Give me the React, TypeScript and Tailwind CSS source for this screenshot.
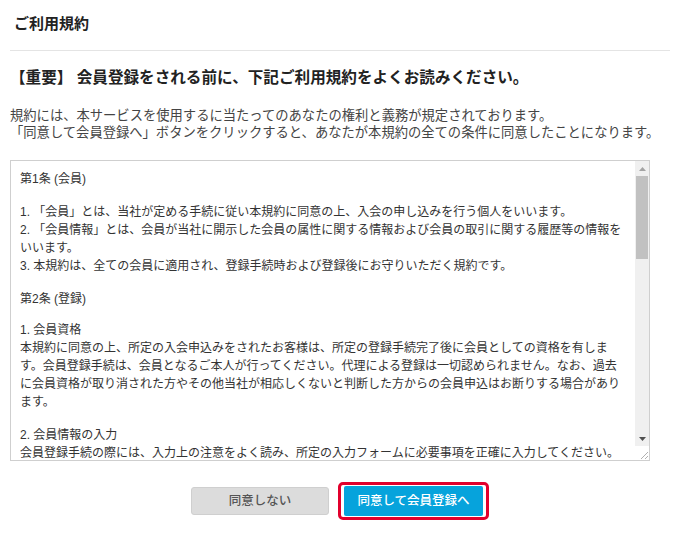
export default function App() {
    return (
        <div className="w-[680px] h-[533px] bg-white text-[#333] font-['Liberation_Sans','Noto_Sans_CJK_JP',sans-serif]">

            {/* ヘッダー */}
            <div className="px-[14px] pt-[15px] pb-[17px]">
                <h1 className="text-[15px] leading-[18px] font-bold text-[#222]">ご利用規約</h1>
            </div>
            <div className="mx-[10px] border-t border-[#e4e4e4]" />

            <div className="px-[10px]">
                <h2 className="mt-[16px] text-[15.6px] leading-[22px] font-bold text-[#222]">
                    【重要】 会員登録をされる前に、下記ご利用規約をよくお読みください。
                </h2>

                <div className="mt-[18px] text-[13.3px] leading-[17px] text-[#444] whitespace-nowrap">
                    <p>規約には、本サービスを使用するに当たってのあなたの権利と義務が規定されております。</p>
                    <p>「同意して会員登録へ」ボタンをクリックすると、あなたが本規約の全ての条件に同意したことになります。</p>
                </div>

                {/* 規約本文 */}
                <div className="mt-[19px] w-[640px] h-[301px] border border-[#cfcfcf] flex">
                    <div className="flex-1 overflow-hidden pl-[9px] pr-[9px] pt-[9px] text-[12px] leading-[18px] text-[#333] flex flex-col gap-[15px]">
                        <p>第1条 (会員)</p>
                        <div>
                            <p>1. 「会員」とは、当社が定める手続に従い本規約に同意の上、入会の申し込みを行う個人をいいます。</p>
                            <p>2. 「会員情報」とは、会員が当社に開示した会員の属性に関する情報および会員の取引に関する履歴等の情報をいいます。</p>
                            <p>3. 本規約は、全ての会員に適用され、登録手続時および登録後にお守りいただく規約です。</p>
                        </div>
                        <p className="-mb-[2px]">第2条 (登録)</p>
                        <div>
                            <p>1. 会員資格</p>
                            <p>本規約に同意の上、所定の入会申込みをされたお客様は、所定の登録手続完了後に会員としての資格を有します。会員登録手続は、会員となるご本人が行ってください。代理による登録は一切認められません。なお、過去に会員資格が取り消された方やその他当社が相応しくないと判断した方からの会員申込はお断りする場合があります。</p>
                        </div>
                        <div className="shrink-0">
                            <p>2. 会員情報の入力</p>
                            <p>会員登録手続の際には、入力上の注意をよく読み、所定の入力フォームに必要事項を正確に入力してください。</p>
                        </div>
                    </div>

                    {/* スクロールバー */}
                    <div className="w-[14px] flex flex-col bg-[#f0f0f0]">
                        <div className="h-[15px] flex items-center justify-center">
                            <svg width="7" height="4" viewBox="0 0 7 4"><path d="M0 4 L3.5 0 L7 4 Z" fill="#a3a3a3" /></svg>
                        </div>
                        <div className="mx-[1px] h-[83px] bg-[#c1c1c1]" />
                        <div className="flex-1" />
                        <div className="h-[15px] flex items-center justify-center">
                            <svg width="7" height="4" viewBox="0 0 7 4"><path d="M0 0 L3.5 4 L7 0 Z" fill="#505050" /></svg>
                        </div>
                        <div className="h-[14px] bg-white flex items-end justify-end">
                            <svg width="12" height="12" viewBox="0 0 12 12">
                                <path d="M11 4 L4 11 M11 8 L8 11" stroke="#b0b0b0" strokeWidth="1" />
                            </svg>
                        </div>
                    </div>
                </div>

                {/* ボタン */}
                <div className="mt-[21px] flex items-center justify-center gap-[9px]">
                    <button className="w-[138px] h-[28px] rounded-[3px] bg-[#dcdcdc] border border-[#cfcfcf] text-[12.5px] font-medium text-[#555]">
                        同意しない
                    </button>
                    <div className="border-[3px] border-[#e2002c] rounded-[5px] px-[3px] py-px">
                        <button className="w-[139px] h-[30px] rounded-[2px] bg-[#06a3dc] text-[12.5px] font-medium text-white">
                            同意して会員登録へ
                        </button>
                    </div>
                </div>
            </div>
        </div>
    )
}
